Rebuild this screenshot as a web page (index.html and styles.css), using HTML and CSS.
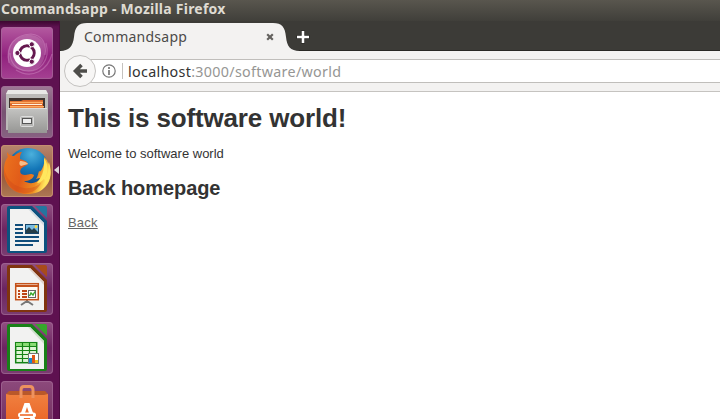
FILE: index.html
```html
<!DOCTYPE html>
<html lang="en">
<head>
<meta charset="utf-8">
<title>Commandsapp</title>
<link rel="stylesheet" href="styles.css">
</head>
<body>
<div class="desktop">
  <header class="titlebar"><span class="window-title">Commandsapp - Mozilla Firefox</span></header>
  <div class="workspace">
    <nav class="launcher">
      <div class="tile ubuntu"><svg viewBox="0 0 52 52">
        <path d="M7 33C4 16 17 7 30 8C41 9 46 18 44 28C42 39 34 45 26 44C14 43 8 38 7 33Z" fill="#fff" opacity=".16"/>
        <path d="M8 36C5 18 13 8 30 7C42 8 46 18 44 28M45 16C50 34 38 45 26 44C14 43 9 34 9 26M15 43C31 53 47 43 51 27" fill="none" stroke="#e3a8d6" stroke-opacity=".35" stroke-width="1.2"/>
        <circle cx="26" cy="26" r="14" fill="#fff"/>
        <circle cx="26" cy="26" r="7.2" fill="none" stroke="#65184f" stroke-width="3"/>
        <path d="M26 26H16M26 26L31 17.3M26 26L31 34.7" stroke="#fff" stroke-width="1.2"/>
        <circle cx="26" cy="26" r="5.5" fill="#fff"/>
        <g fill="#65184f" stroke="#fff"><circle cx="16.4" cy="26" r="2.6"/><circle cx="30.8" cy="17.3" r="2.6"/><circle cx="30.8" cy="34.7" r="2.6"/></g>
      </svg></div>
      <div class="tile files"><svg viewBox="0 0 52 52">
        <defs><linearGradient id="metal" x2="0" y2="1"><stop stop-color="#c4c4c2"/><stop offset="1" stop-color="#969694"/></linearGradient></defs>
        <path d="M7 4H45L47 8V44H5V8Z" fill="#bbbab8"/><path d="M7 4H45L47 8H5Z" fill="#e8e8e6"/>
        <path d="M8 12H44V23H8Z" fill="#3e3430"/>
        <path d="M9 15H20L22 14H42V22H9Z" fill="#d9652a"/><path d="M9 16.5H42M9 20.7H43" stroke="#ffad62" stroke-width="1.5"/><path d="M11 18.5H41" stroke="#fff1de" stroke-width="1"/>
        <path d="M7 22H46V47H7Z" fill="url(#metal)"/><path d="M7 22.5H46" stroke="#dededc"/>
        <rect x="19.5" y="30.5" width="13" height="10" rx="1" fill="#b5b5b3" stroke="#ddd"/><rect x="21.5" y="32.5" width="9" height="5" fill="#eee" stroke="#555"/>
      </svg></div>
      <div class="tile firefox"><svg viewBox="0 0 52 52">
        <defs><radialGradient id="globe" cx=".58" cy=".15" r=".8"><stop stop-color="#4bb0dc"/><stop offset=".45" stop-color="#1477b8"/><stop offset="1" stop-color="#123e7d"/></radialGradient>
        <linearGradient id="fox" x1="0" x2="1" y2=".3"><stop stop-color="#ec741e"/><stop offset=".5" stop-color="#e15b19"/><stop offset=".82" stop-color="#ee8a20"/><stop offset="1" stop-color="#ffe05a"/></linearGradient></defs>
        <circle cx="27" cy="24" r="21" fill="url(#globe)"/>
        <path d="M6 7C8 10 10 11 13 11C15 9 18 7 21 7C19 9 19 12 19 14C22 15 26 16 27 19C25 21 21 22 20 24C18 27 20 30 24 30C28 30 29 28 33 30C32 34 28 36 23 36C29 40 37 38 39 33C37 33 36 34 35 34C37 31 37 29 38 26C39 27 40 26 41 24C43 20 44 16 43 12C46 14 47 17 47 19L48 17C51 27 50 35 45 41C40 47 34 49 26 49C12 49 3 39 3 26C3 18 5 14 7 12C6 10 6 9 6 7Z" fill="url(#fox)"/>
        <path d="M3 23C5 33 10 39 19 42C28 45 35 42 40 38C36 46 29 49 22 48C11 46 3 38 3 23Z" fill="#cf4819" opacity=".4"/>
        <path d="M43 13C48 20 47 28 44 34C47 30 48 25 48 19C51 29 49 36 43 41C45 37 44 35 43 34C40 37 38 38 36 38C40 33 44 27 43 13Z" fill="#ffe75e"/>
        <path d="M19 16C22 16 26 17 27 19L20 21C18 20 18 18 19 16Z" fill="#f8bd88"/>
      </svg></div>
      <div class="tile writer"><svg viewBox="0 0 52 52">
        <path d="M8 2H31L46 17V47Q46 49 44 49H8Q6 49 6 47V4Q6 2 8 2Z" fill="#0d527f"/>
        <path d="M9 5H29L43 19V47H9Z" fill="#f2f2f1"/><path d="M29 5L43 19V22L27 5Z" fill="#d5dce1"/>
        <path d="M34 2H44Q46 2 46 4V14Z" fill="#24759f"/>
        <path d="M14 21H22M14 25H22M14 29H22M14 33H38M14 37H38M14 41H32" stroke="#104d7b" stroke-width="2"/>
        <rect x="24.5" y="20.5" width="13" height="9" fill="#79bce3" stroke="#174569"/><path d="M25 29V26L28 23L31 26L33 24L37 28V29Z" fill="#263d46"/><circle cx="35" cy="22.7" r="1.4" fill="#ffd73c"/>
      </svg></div>
      <div class="tile impress"><svg viewBox="0 0 52 52">
        <path d="M8 2H31L46 17V47Q46 49 44 49H8Q6 49 6 47V4Q6 2 8 2Z" fill="#80340f"/>
        <path d="M9 5H29L43 19V47H9Z" fill="#f2f2f1"/><path d="M29 5L43 19V22L27 5Z" fill="#dfd2cb"/>
        <path d="M34 2H44Q46 2 46 4V14Z" fill="#a84b1b"/>
        <path d="M26 37V40M26 38L20 42M26 38L32 42" stroke="#777" stroke-width="2"/>
        <rect x="14.7" y="20.7" width="22.6" height="16" fill="#fff8ef" stroke="#c45119" stroke-width="1.5"/><path d="M15 23H37" stroke="#c45119" stroke-width="2"/>
        <path d="M17 28H19M17 31H19M17 34H19M21 28H26M21 31H26M21 34H26" stroke="#bd4516" stroke-width="1.8"/><rect x="27.5" y="27.5" width="7" height="7" fill="#fff" stroke="#666"/><path d="M28.5 33L30 30L32 32L34 28.5" fill="none" stroke="#35a629" stroke-width="1.4"/>
      </svg></div>
      <div class="tile calc"><svg viewBox="0 0 52 52">
        <path d="M8 2H31L46 17V47Q46 49 44 49H8Q6 49 6 47V4Q6 2 8 2Z" fill="#198018"/>
        <path d="M9 5H29L43 19V47H9Z" fill="#f2f2f1"/><path d="M29 5L43 19V22L27 5Z" fill="#d0ddcd"/>
        <path d="M34 2H44Q46 2 46 4V14Z" fill="#36a62b"/>
        <rect x="14.7" y="20.7" width="21" height="20" fill="#dff5d5" stroke="#168316" stroke-width="1.5"/><path d="M15 21H35V24H15Z" fill="#8bdc75"/>
        <path d="M15 24.5H35M15 28.5H35M15 32.5H35M15 36.5H35M21.5 21V41M28.5 21V41" stroke="#168316" stroke-width="1.2"/>
        <rect x="27.5" y="31.5" width="10" height="10" fill="#fff" stroke="#777"/><path d="M28 36H31V41H28Z" fill="#1689d0"/><path d="M31 33H34V41H31Z" fill="#df5819"/><path d="M34 38H37V41H34Z" fill="#f2c21c"/>
      </svg></div>
      <div class="tile software"><svg viewBox="0 0 52 52">
        <defs><linearGradient id="bag" x2="0" y2="1"><stop stop-color="#f0803f"/><stop offset="1" stop-color="#e85c20"/></linearGradient></defs>
        <path d="M5 13L8 10H44L47 13V52H5Z" fill="#b9582a"/><path d="M5 13L9 14H43L47 13V52H5Z" fill="url(#bag)"/>
        <path d="M20 17V9Q20 5.5 23 5.5H29Q32 5.5 32 9V17" fill="none" stroke="#ed925f" stroke-width="3"/>
        <path d="M23.5 22H28.5L36 43H31L29 37H23L21 43H16ZM26 26L24 32H28Z" fill="#fff" fill-rule="evenodd"/><rect x="17" y="31.5" width="18" height="5" rx="2.5" fill="#fff"/><path d="M19 34H32" stroke="#ed692b" stroke-width="1.6"/>
      </svg></div>
    </nav>
    <main class="browser">
      <div class="tabstrip">
        <svg class="tab-shape" viewBox="0 0 240 30"><path d="M0 30C9 30 13 25 14 16C15 6 18 2 27 2H213C222 2 225 6 226 16C227 25 230 30 240 30Z" fill="#f3f2f1"/></svg>
        <span class="tab-title">Commandsapp</span>
        <svg class="tab-close" viewBox="0 0 8 8"><path d="M1.2 1.2L6.8 6.8M6.8 1.2L1.2 6.8" stroke="#64625f" stroke-width="2.2"/></svg>
        <svg class="new-tab" viewBox="0 0 14 14"><path d="M7 .5V13.5M.5 7H13.5" stroke="#272623" stroke-width="4"/><path d="M7 1V13M1 7H13" stroke="#fff" stroke-width="2.6"/></svg>
      </div>
      <div class="toolbar">
        <div class="back"><svg viewBox="0 0 16 16"><path d="M15 8H4M9.5 2L3.5 8L9.5 14" fill="none" stroke="#4e4d4a" stroke-width="3.6"/></svg></div>
        <div class="address">
          <svg class="info" viewBox="0 0 14 14"><circle cx="7" cy="7" r="6.2" fill="none" stroke="#777" stroke-width="1.2"/><path d="M7 6V11M7 3V5" stroke="#777" stroke-width="1.7"/></svg>
          <i class="divider"></i>
          <span class="url"><b>localhost</b>:3000/software/world</span>
        </div>
      </div>
      <article class="page">
        <h1>This is software world!</h1>
        <p>Welcome to software world</p>
        <h2>Back homepage</h2>
        <a href="#">Back</a>
      </article>
    </main>
  </div>
</div>
</body>
</html>
```
FILE: styles.css
```css
* { box-sizing: border-box; }
body { margin: 0; overflow: hidden; background: #fff; }
svg { display: block; flex: none; }
.desktop { width: 720px; height: 419px; overflow: hidden; display: flex; flex-direction: column; }
.titlebar { height: 21px; flex: none; background: linear-gradient(#59564e, #403f3a); padding-left: 1px; color: #dfdbd2; font: bold 14px/18px "Noto Sans", sans-serif; white-space: nowrap; }
.window-title { letter-spacing: .24px; }
.workspace { display: flex; height: 398px; }
.launcher { width: 60px; flex: none; display: flex; flex-direction: column; gap: 7px; padding: 6px 0 0 1px; overflow: hidden; background: linear-gradient(#3c0730, transparent 6px), #5e1150; border-right: 1px solid #4b0b3f; }
.tile { width: 52px; height: 52px; flex: none; position: relative; border-radius: 4px; background: linear-gradient(#925083, #6b2460 50%, #7b3c71); box-shadow: inset 0 0 0 1px #a46b98aa; }
.tile svg { width: 52px; height: 52px; }
.ubuntu { background: linear-gradient(#b45aa0, #91217e 55%, #a54192); }
.files { background: linear-gradient(#9d7995, #775372 50%, #886282); }
.firefox { background: linear-gradient(#b7856e, #99593c 60%, #ad7854); box-shadow: inset 0 0 0 1px #c58e70; }
.firefox::after { content: ""; position: absolute; right: -6px; top: 21px; border: solid transparent; border-width: 4px 5px 4px 0; border-right-color: #ddd3da; }
.software { background: linear-gradient(#8d4a7c, #6d2a5a); }
.browser { width: 660px; display: flex; flex-direction: column; background: #fff; }
.tabstrip { height: 30px; flex: none; position: relative; display: flex; align-items: center; background: #3c3b37; border-bottom: 1px solid #292825; }
.tab-shape { position: absolute; left: 0; top: 0; width: 240px; height: 30px; }
.tab-title { position: relative; width: 180px; padding: 2px 0 0 24px; color: #4c4b49; font: 14px/18px "Noto Sans", sans-serif; letter-spacing: .25px; white-space: nowrap; }
.tab-close { position: relative; width: 8px; height: 8px; margin: 3px 0 0 26px; }
.new-tab { width: 14px; height: 14px; margin: 3px 0 0 22px; }
.toolbar { height: 41px; flex: none; display: flex; align-items: flex-start; padding: 4px 0 0 4px; background: #f3f2f1; border-bottom: 1px solid #c5c3c0; }
.back { width: 32px; height: 32px; flex: none; position: relative; z-index: 1; display: flex; align-items: center; justify-content: center; border: 1px solid #c4c2c0; border-radius: 50%; background: #f7f6f5; }
.back svg { width: 16px; height: 16px; }
.address { flex: 1; height: 24px; display: flex; align-items: center; margin: 4px 0 0 -7px; padding-left: 13px; border: solid #c0bebb; border-width: 1px 0; background: #fff; }
.info { width: 14px; height: 14px; }
.divider { width: 1px; height: 16px; margin: 0 5px 0 6px; background: #c4c2bf; }
.url { padding-top: 1px; color: #969694; font: 14.3px/20px "Noto Sans", sans-serif; letter-spacing: .31px; white-space: nowrap; }
.url b { color: #333; font-weight: normal; }
.page { padding: 9px 8px; color: #333; font: 13px/18px "Liberation Sans", sans-serif; }
.page h1 { margin: 0; font-size: 26px; line-height: 34px; letter-spacing: -.15px; }
.page p { margin: 10px 0 0; }
.page h2 { margin: 12px 0 0; font-size: 20px; line-height: 26px; letter-spacing: -.08px; }
.page a { display: inline-block; margin-top: 13px; color: #666; letter-spacing: .2px; }
```
